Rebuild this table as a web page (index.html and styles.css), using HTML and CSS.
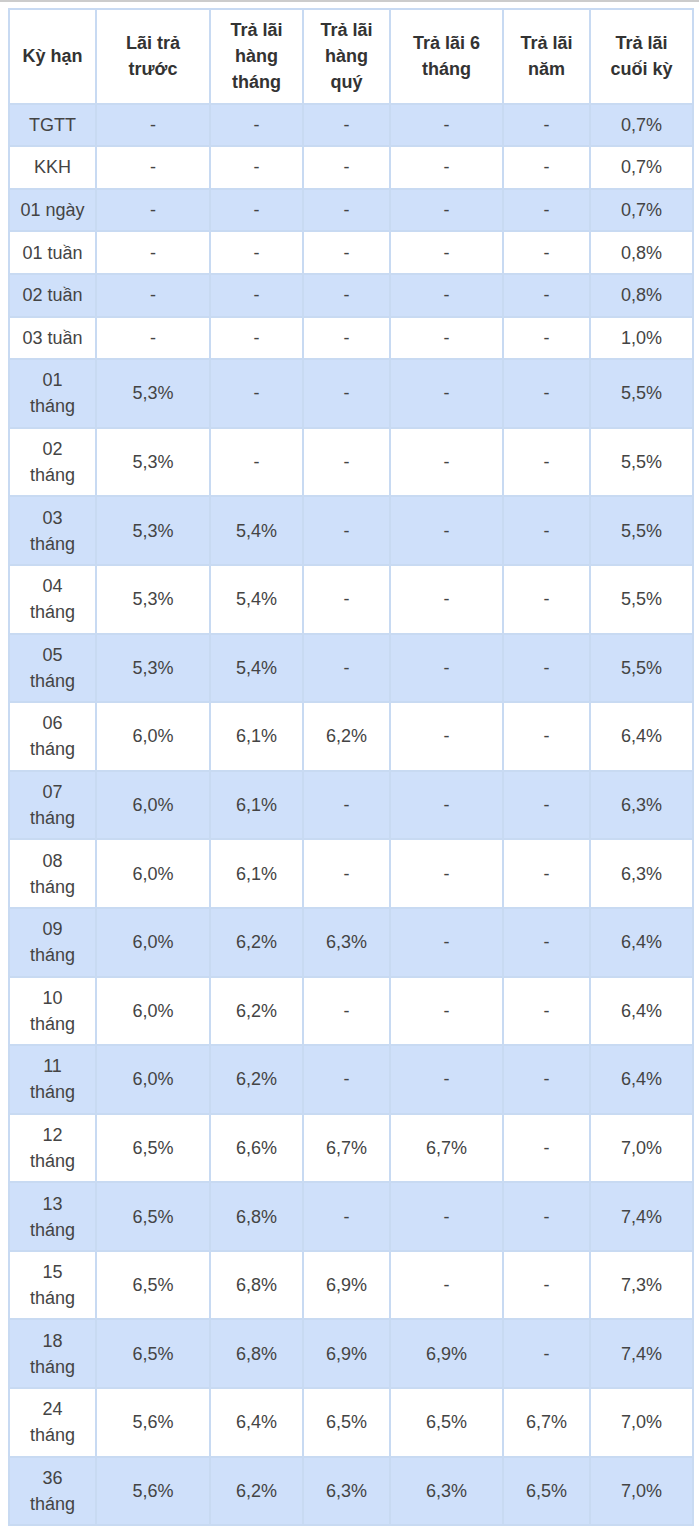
FILE: index.html
```html
<!DOCTYPE html>
<html lang="vi">
<head>
<meta charset="utf-8">
<title>Lãi suất</title>
<link rel="stylesheet" href="styles.css">
</head>
<body>
<div class="topline"></div>
<table class="rates">
  <colgroup>
    <col class="c1"><col class="c2"><col class="c3"><col class="c4"><col class="c5"><col class="c6"><col class="c7">
  </colgroup>
  <thead>
    <tr>
      <th>Kỳ hạn</th>
      <th>Lãi trả trước</th>
      <th>Trả lãi hàng tháng</th>
      <th>Trả lãi hàng quý</th>
      <th>Trả lãi 6 tháng</th>
      <th>Trả lãi năm</th>
      <th>Trả lãi cuối kỳ</th>
    </tr>
  </thead>
  <tbody>
    <tr><td>TGTT</td><td>-</td><td>-</td><td>-</td><td>-</td><td>-</td><td>0,7%</td></tr>
    <tr><td>KKH</td><td>-</td><td>-</td><td>-</td><td>-</td><td>-</td><td>0,7%</td></tr>
    <tr><td>01 ngày</td><td>-</td><td>-</td><td>-</td><td>-</td><td>-</td><td>0,7%</td></tr>
    <tr><td>01 tuần</td><td>-</td><td>-</td><td>-</td><td>-</td><td>-</td><td>0,8%</td></tr>
    <tr><td>02 tuần</td><td>-</td><td>-</td><td>-</td><td>-</td><td>-</td><td>0,8%</td></tr>
    <tr><td>03 tuần</td><td>-</td><td>-</td><td>-</td><td>-</td><td>-</td><td>1,0%</td></tr>
    <tr><td>01 tháng</td><td>5,3%</td><td>-</td><td>-</td><td>-</td><td>-</td><td>5,5%</td></tr>
    <tr><td>02 tháng</td><td>5,3%</td><td>-</td><td>-</td><td>-</td><td>-</td><td>5,5%</td></tr>
    <tr><td>03 tháng</td><td>5,3%</td><td>5,4%</td><td>-</td><td>-</td><td>-</td><td>5,5%</td></tr>
    <tr><td>04 tháng</td><td>5,3%</td><td>5,4%</td><td>-</td><td>-</td><td>-</td><td>5,5%</td></tr>
    <tr><td>05 tháng</td><td>5,3%</td><td>5,4%</td><td>-</td><td>-</td><td>-</td><td>5,5%</td></tr>
    <tr><td>06 tháng</td><td>6,0%</td><td>6,1%</td><td>6,2%</td><td>-</td><td>-</td><td>6,4%</td></tr>
    <tr><td>07 tháng</td><td>6,0%</td><td>6,1%</td><td>-</td><td>-</td><td>-</td><td>6,3%</td></tr>
    <tr><td>08 tháng</td><td>6,0%</td><td>6,1%</td><td>-</td><td>-</td><td>-</td><td>6,3%</td></tr>
    <tr><td>09 tháng</td><td>6,0%</td><td>6,2%</td><td>6,3%</td><td>-</td><td>-</td><td>6,4%</td></tr>
    <tr><td>10 tháng</td><td>6,0%</td><td>6,2%</td><td>-</td><td>-</td><td>-</td><td>6,4%</td></tr>
    <tr><td>11 tháng</td><td>6,0%</td><td>6,2%</td><td>-</td><td>-</td><td>-</td><td>6,4%</td></tr>
    <tr><td>12 tháng</td><td>6,5%</td><td>6,6%</td><td>6,7%</td><td>6,7%</td><td>-</td><td>7,0%</td></tr>
    <tr><td>13 tháng</td><td>6,5%</td><td>6,8%</td><td>-</td><td>-</td><td>-</td><td>7,4%</td></tr>
    <tr><td>15 tháng</td><td>6,5%</td><td>6,8%</td><td>6,9%</td><td>-</td><td>-</td><td>7,3%</td></tr>
    <tr><td>18 tháng</td><td>6,5%</td><td>6,8%</td><td>6,9%</td><td>6,9%</td><td>-</td><td>7,4%</td></tr>
    <tr><td>24 tháng</td><td>5,6%</td><td>6,4%</td><td>6,5%</td><td>6,5%</td><td>6,7%</td><td>7,0%</td></tr>
    <tr><td>36 tháng</td><td>5,6%</td><td>6,2%</td><td>6,3%</td><td>6,3%</td><td>6,5%</td><td>7,0%</td></tr>
  </tbody>
</table>
</body>
</html>
```
FILE: styles.css
```css
html, body {
  margin: 0;
  padding: 0;
  background: #ffffff;
}
body {
  font-family: "Liberation Sans", Arial, sans-serif;
  color: #444444;
}
.topline {
  height: 2px;
  background: #cccccc;
}
.rates {
  margin: 6px 0 0 8px;
  width: 684px;
  table-layout: fixed;
  border-collapse: collapse;
  font-size: 18px;
  line-height: 26px;
}
.rates .c1 { width: 87px; }
.rates .c2 { width: 114px; }
.rates .c3 { width: 93px; }
.rates .c4 { width: 87px; }
.rates .c5 { width: 113px; }
.rates .c6 { width: 87px; }
.rates .c7 { width: 103px; }
.rates th,
.rates td {
  border: 2px solid #c8daf2;
  padding: 7.3px 10px;
  text-align: center;
  vertical-align: middle;
}
.rates th {
  font-weight: bold;
  color: #333333;
  background: #ffffff;
}
.rates tbody tr:nth-child(odd) td {
  background: #cfe0fa;
}
.rates tbody tr:nth-child(even) td {
  background: #ffffff;
}
```
